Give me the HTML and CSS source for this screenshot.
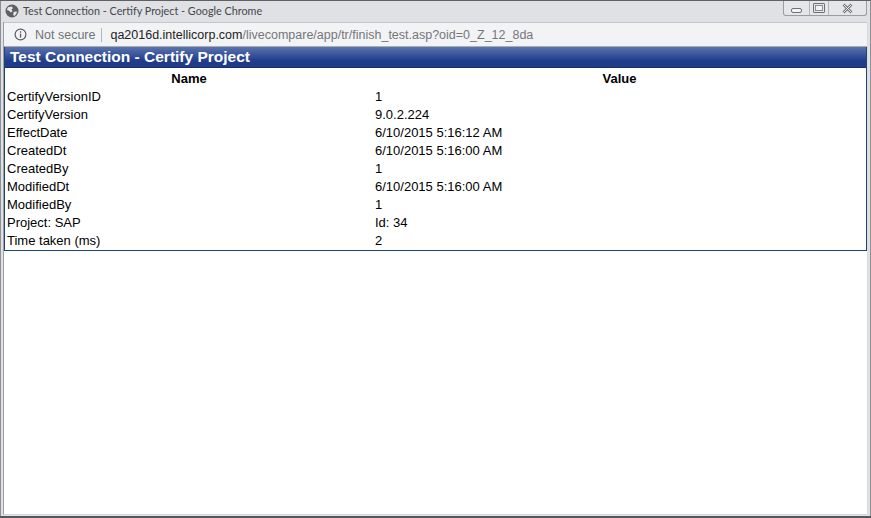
FILE: index.html
```html
<!DOCTYPE html>
<html lang="en">
<head>
<meta charset="utf-8">
<title>Test Connection - Certify Project</title>
<link rel="stylesheet" href="styles.css">
</head>
<body>
<div class="window">
  <div class="titlebar">
    <svg class="globe" width="14" height="14" viewBox="0 0 14 14"><circle cx="7" cy="7" r="6.5" fill="#5c5f63"/><path d="M3 3.2 L6.6 2.4 L8 4 L6.4 5.6 L7.6 7 L6 8.6 L3.6 6.6 L1.8 6 Z M8.6 8 L11.6 7.2 L11.8 9 L9.6 12 L8.2 11 Z" fill="#e6e8ea"/></svg>
    <span class="title-text">Test Connection - Certify Project - Google Chrome</span>
    <div class="controls">
      <div class="ctl ctl-min"><span class="min-glyph"></span></div>
      <div class="ctl ctl-max"><span class="max-glyph"></span></div>
      <div class="ctl ctl-close">
        <svg width="11" height="11" viewBox="0 0 11 11"><path d="M1.5 1.5 L9.5 9.5 M9.5 1.5 L1.5 9.5" stroke="#6d7074" stroke-width="2.6" fill="none"/><path d="M1.5 1.5 L9.5 9.5 M9.5 1.5 L1.5 9.5" stroke="#f2f3f4" stroke-width="1" fill="none"/></svg>
      </div>
    </div>
  </div>
  <div class="client">
    <div class="addressbar">
      <svg class="info" width="13" height="13" viewBox="0 0 13 13"><circle cx="6.5" cy="6.5" r="5.4" fill="none" stroke="#5a5d60" stroke-width="1.2"/><rect x="5.9" y="5.6" width="1.3" height="4" fill="#5a5d60"/><rect x="5.9" y="3.3" width="1.3" height="1.4" fill="#5a5d60"/></svg>
      <span class="not-secure">Not secure</span>
      <span class="divider"></span>
      <span class="url"><span class="host">qa2016d.intellicorp.com</span>/livecompare/app/tr/finish_test.asp?oid=0_Z_12_8da</span>
    </div>
    <div class="page">
      <div class="panel">
        <h1 class="panel-title">Test Connection - Certify Project</h1>
        <table class="data">
          <colgroup><col class="col-name"><col></colgroup>
          <thead><tr><th>Name</th><th>Value</th></tr></thead>
          <tbody>
            <tr><td>CertifyVersionID</td><td>1</td></tr>
            <tr><td>CertifyVersion</td><td>9.0.2.224</td></tr>
            <tr><td>EffectDate</td><td>6/10/2015 5:16:12 AM</td></tr>
            <tr><td>CreatedDt</td><td>6/10/2015 5:16:00 AM</td></tr>
            <tr><td>CreatedBy</td><td>1</td></tr>
            <tr><td>ModifiedDt</td><td>6/10/2015 5:16:00 AM</td></tr>
            <tr><td>ModifiedBy</td><td>1</td></tr>
            <tr><td>Project: SAP</td><td>Id: 34</td></tr>
            <tr><td>Time taken (ms)</td><td>2</td></tr>
          </tbody>
        </table>
      </div>
    </div>
  </div>
</div>
</body>
</html>
```

FILE: styles.css
```css
* { box-sizing: border-box; }
html, body { margin: 0; padding: 0; height: 100%; background: #fff; overflow: hidden; }
.window {
  width: 871px;
  height: 518px;
  display: flex;
  flex-direction: column;
  background: #dfe1e4;
  border-top: 1px solid #5f6163;
  border-bottom: 2px solid #55585b;
  padding: 0 3px 1px 3px;
  box-shadow: inset 1px 0 0 #8d8f92, inset -1px 0 0 #8d8f92;
}
.titlebar {
  height: 21px;
  display: flex;
  align-items: center;
  flex: none;
  padding-left: 2px;
}
.globe { flex: none; margin-bottom: 1px; }
.title-text {
  margin-left: 4px;
  margin-bottom: 2px;
  font: 10.8px Lato, "Open Sans", sans-serif;
  color: #454749;
  white-space: nowrap;
}
.controls {
  margin-left: auto;
  margin-right: 1px;
  align-self: flex-start;
  display: flex;
  height: 15px;
  border: 1px solid #9a9c9f;
  border-top: 0;
  border-radius: 0 0 3px 3px;
  background: #e4e6e8;
}
.ctl { display: flex; align-items: center; justify-content: center; }
.ctl-min { width: 26px; border-right: 1px solid #b4b6b9; }
.ctl-max { width: 19px; border-right: 1px solid #b4b6b9; }
.ctl-close { width: 37px; }
.min-glyph { width: 11px; height: 5px; margin-top: 5px; border: 1px solid #6d7074; border-radius: 2px; background: #f2f3f4; }
.max-glyph { width: 12px; height: 10px; border: 1px solid #6d7074; border-radius: 1px; background: #f2f3f4; box-shadow: inset 0 0 0 1px #e4e6e8, inset 0 0 0 2px #8a8d90; }
.client {
  flex: 1;
  display: flex;
  flex-direction: column;
  background: #fff;
  border-left: 1px solid #9c9ea1;
  border-right: 1px solid #d8dadc;
  border-bottom: 1px solid #d8dadc;
  min-height: 0;
}
.addressbar {
  height: 25px;
  flex: none;
  display: flex;
  align-items: center;
  padding-left: 10px;
  background: #f2f3f5;
  border-top: 1px solid #c4c6c9;
  border-bottom: 1px solid #a9abae;
  font: 12.5px "Liberation Sans", Arial, sans-serif;
  white-space: nowrap;
}
.info { flex: none; }
.not-secure { margin-left: 8px; color: #707376; }
.divider { width: 1px; height: 14px; margin: 0 8px 0 6px; background: #b4b6b9; }
.url { color: #74777a; }
.host { color: #222; }
.panel {
  width: 863px;
  border: 1px solid #1c4677;
  border-top: 0;
  font: 13px "Liberation Sans", Arial, sans-serif;
  color: #000;
}
.panel-title {
  margin: 0;
  height: 21px;
  padding-left: 5px;
  font: bold 15.5px/20px "Liberation Sans", Arial, sans-serif;
  color: #fff;
  background: linear-gradient(#5a74ad, #1f3b8a 70%, #1f3b8a);
  border-bottom: 1px solid #16305f;
}
.data { width: 100%; margin-top: 2px; border-collapse: collapse; table-layout: fixed; }
.col-name { width: 368px; }
.data th, .data td { height: 18px; padding: 0 2px; line-height: 18px; }
.data th { text-align: center; font-weight: bold; }
.data td { text-align: left; }
```
